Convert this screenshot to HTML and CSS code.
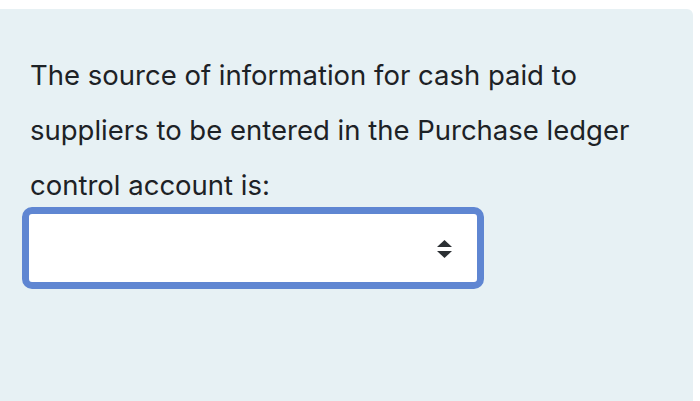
FILE: index.html
```html
<!DOCTYPE html>
<html>
<head>
<meta charset="utf-8">
<link rel="stylesheet" href="styles.css">
</head>
<body>
<div class="panel">
  <p class="question">The source of information for cash paid to suppliers to be entered in the Purchase ledger control account is:</p>
  <div class="select">
    <svg class="arrows" width="15" height="18" viewBox="0 0 15 18">
      <path d="M7.5 0 L15 7 L0 7 Z" fill="#2b2f33"/>
      <path d="M0 11 L15 11 L7.5 18 Z" fill="#2b2f33"/>
    </svg>
  </div>
</div>
</body>
</html>
```
FILE: styles.css
```css
html, body {
  margin: 0;
  padding: 0;
  background: #ffffff;
}
body {
  width: 700px;
  height: 401px;
  overflow: hidden;
}
.panel {
  margin: 9px 7px 0 0;
  height: 392px;
  background: #e7f1f4;
  border-top-right-radius: 6px;
  padding: 39px 0 0 22px;
  box-sizing: border-box;
}
.question {
  margin: 0 0 0 8px;
  width: 640px;
  font-family: Inter, "Noto Sans", sans-serif;
  font-size: 27.5px;
  line-height: 55px;
  color: #1d2226;
}
.select {
  margin-top: -6px;
  width: 462px;
  height: 82px;
  box-sizing: border-box;
  border: 7px solid #5f86d2;
  border-radius: 10px;
  background: #ffffff;
  display: flex;
  align-items: center;
  justify-content: flex-end;
  padding-right: 25px;
}
.arrows {
  display: block;
  margin-top: 1px;
}
```
